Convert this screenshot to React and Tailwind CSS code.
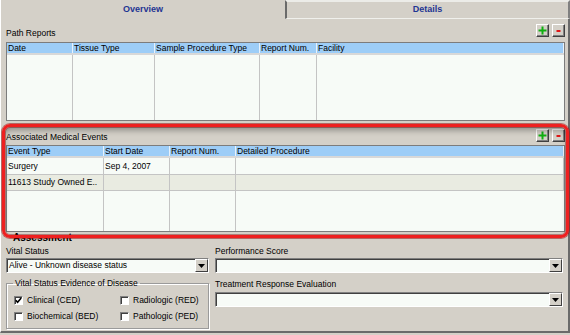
import React from "react";

const font = "font-['Liberation_Sans',Arial,sans-serif]";

function MiniButton({ kind }) {
  return (
    <div className="w-[13px] h-[13px] bg-[#d4d0c8] border border-t-white border-l-white border-r-[#404040] border-b-[#404040] shadow-[inset_-1px_-1px_0_#808080] flex items-center justify-center">
      {kind === "add" ? (
        <svg width="9" height="9" viewBox="0 0 9 9">
          <rect x="3.5" y="0.5" width="2" height="8" fill="#10b010" />
          <rect x="0.5" y="3.5" width="8" height="2" fill="#10b010" />
        </svg>
      ) : (
        <svg width="9" height="9" viewBox="0 0 9 9">
          <rect x="2.5" y="4" width="4" height="2" fill="#e01818" />
        </svg>
      )}
    </div>
  );
}

function Select({ value }) {
  return (
    <div className="h-[15px] flex bg-[#f7fbf7] border border-t-[#808080] border-l-[#808080] border-b-white border-r-white shadow-[inset_1px_1px_0_#404040]">
      <div className="flex-1 pl-[2px] leading-[13px] truncate">{value}</div>
      <div className="w-[13px] h-[13px] bg-[#d4d0c8] border border-t-white border-l-white border-r-[#404040] border-b-[#404040] flex items-center justify-center">
        <svg width="7" height="4" viewBox="0 0 7 4">
          <polygon points="0,0 7,0 3.5,4" fill="#000" />
        </svg>
      </div>
    </div>
  );
}

function Checkbox({ checked, label }) {
  return (
    <div className="flex items-center gap-[4px] h-[13px]">
      <div className="w-[9px] h-[9px] bg-white border border-t-[#808080] border-l-[#808080] border-b-white border-r-white shadow-[inset_1px_1px_0_#404040] flex items-center justify-center">
        {checked && (
          <svg width="7" height="7" viewBox="0 0 7 7">
            <polyline points="0.8,3.2 2.6,5.2 6.2,1" fill="none" stroke="#000" strokeWidth="1.6" />
          </svg>
        )}
      </div>
      <span>{label}</span>
    </div>
  );
}

function Table({ cols, rows, height }) {
  return (
    <div className="flex flex-col border border-[#7c7c7c] bg-[#f7fbf7]" style={{ height }}>
      <div className="flex h-[12px] bg-[#9dcdf7] border-b-2 border-b-[#d8d8d8]">
        {cols.map((c, i) => (
          <div
            key={c.name}
            className="leading-[10px] pl-[1px] border-r border-r-[#e8f2fc] truncate"
            style={i === cols.length - 1 ? { flex: 1 } : { width: c.w }}
          >
            {c.name}
          </div>
        ))}
      </div>
      {rows.map((r, ri) => (
        <div
          key={ri}
          className={
            "flex border-b border-b-[#c4c4c4] " + (ri % 2 === 1 ? "bg-[#e9ebe1] h-[16px]" : "h-[17px]")
          }
        >
          {cols.map((c, i) => (
            <div
              key={c.name}
              className="flex items-center pl-[1px] border-r border-r-[#c4c4c4] truncate"
              style={i === cols.length - 1 ? { flex: 1 } : { width: c.w }}
            >
              {r[i]}
            </div>
          ))}
        </div>
      ))}
      <div className="flex flex-1">
        {cols.map((c, i) => (
          <div
            key={c.name}
            className={i === cols.length - 1 ? "flex-1" : "border-r border-r-[#c4c4c4]"}
            style={i === cols.length - 1 ? {} : { width: c.w }}
          />
        ))}
      </div>
    </div>
  );
}

export default function App() {
  return (
    <div className={"relative w-[570px] h-[335px] overflow-hidden bg-[#d4d0c8] text-[8.5px] text-black " + font}>
      {/* tabs */}
      <div className="flex h-[19px]">
        <div className="w-[285px] border-l border-l-white flex items-center justify-center font-bold text-[9px] text-[#1f3593]">
          Overview
        </div>
        <div className="flex-1 border-l-2 border-l-[#6a6a6a] border-t-2 border-t-[#ecece8] border-r-2 border-r-[#808080] border-b border-b-[#f0f0ec] flex items-center justify-center font-bold text-[9px] text-[#1f3593]">
          Details
        </div>
      </div>

      {/* pane */}
      <div className="h-[314px] border-l border-l-white border-r-2 border-r-[#6a6a6a] border-b-2 border-b-[#6a6a6a] pl-[5px] pr-[3px]">
        {/* Path Reports */}
        <div className="flex h-[23px]">
          <div className="mt-[9px] leading-[10px]">Path Reports</div>
          <div className="ml-auto mt-[5px] flex gap-[3px]">
            <MiniButton kind="add" />
            <MiniButton kind="remove" />
          </div>
        </div>
        <Table
          height={79}
          cols={[
            { name: "Date", w: 66 },
            { name: "Tissue Type", w: 82 },
            { name: "Sample Procedure Type", w: 105 },
            { name: "Report Num.", w: 57 },
            { name: "Facility" },
          ]}
          rows={[]}
        />

        {/* Associated Medical Events */}
        <div className="flex h-[24px]">
          <div className="mt-[11px] leading-[10px]">Associated Medical Events</div>
          <div className="ml-auto mt-[8px] flex gap-[3px]">
            <MiniButton kind="add" />
            <MiniButton kind="remove" />
          </div>
        </div>
        <Table
          height={87}
          cols={[
            { name: "Event Type", w: 97 },
            { name: "Start Date", w: 66 },
            { name: "Report Num.", w: 66 },
            { name: "Detailed Procedure" },
          ]}
          rows={[
            ["Surgery", "Sep 4, 2007", "", ""],
            ["11613 Study Owned E..", "", "", ""],
          ]}
        />

        {/* Assessment, mostly hidden under the highlight */}
        <div className="h-[12px] pl-[7px] font-bold text-[10px] leading-[12px]">Assessment</div>

        <div className="flex gap-[6px] pr-[2px]">
          <div className="w-[203px]">
            <div className="h-[14px] leading-[12px] pt-[1px]">Vital Status</div>
            <Select value="Alive - Unknown disease status" />
            <fieldset className="mt-[5px] h-[51px] border border-[#9a9a9a] shadow-[inset_1px_1px_0_#fff,1px_1px_0_#fff] px-[7px]">
              <legend className="ml-[-1px] px-[2px] leading-[10px]">Vital Status Evidence of Disease</legend>
              <div className="grid grid-cols-[106px_1fr] gap-y-[3px] mt-[6px]">
                <Checkbox checked label="Clinical (CED)" />
                <Checkbox label="Radiologic (RED)" />
                <Checkbox label="Biochemical (BED)" />
                <Checkbox label="Pathologic (PED)" />
              </div>
            </fieldset>
          </div>
          <div className="flex-1">
            <div className="h-[14px] leading-[12px] pt-[1px]">Performance Score</div>
            <Select value="" />
            <div className="h-[19px] pt-[6px] leading-[10px]">Treatment Response Evaluation</div>
            <Select value="" />
          </div>
        </div>
      </div>

      {/* red highlight annotation */}
      <div className="absolute left-[2px] top-[124px] w-[567px] h-[114px] rounded-[8px] border-[3px] border-[#ee2020] shadow-[0_0_0_1px_rgba(150,0,0,0.5),inset_0_0_0_1px_rgba(120,0,0,0.4),inset_0_5px_6px_-2px_rgba(0,0,0,0.35)] pointer-events-none" />
    </div>
  );
}
